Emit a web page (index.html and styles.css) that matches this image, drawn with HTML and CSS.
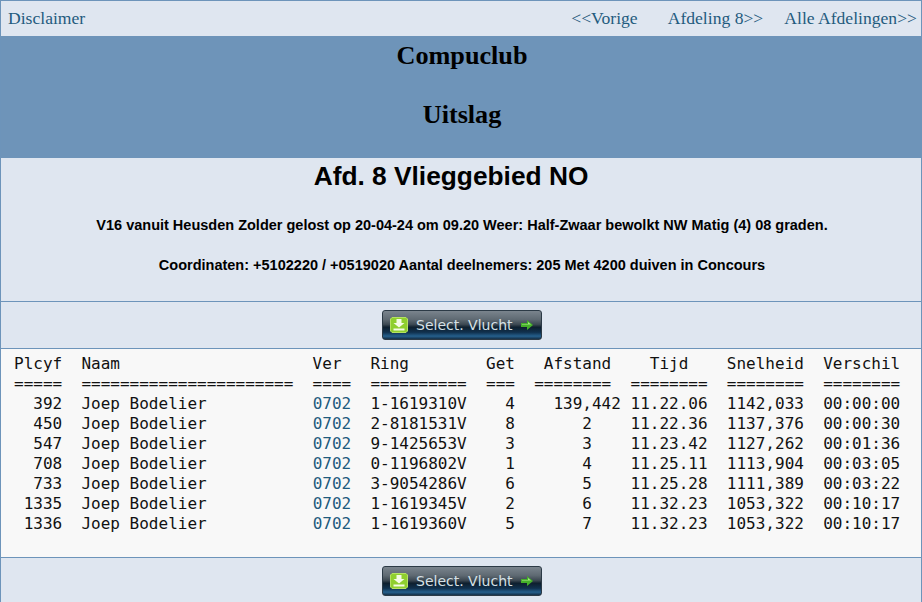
FILE: index.html
```html
<!DOCTYPE html>
<html lang="nl">
<head>
<meta charset="utf-8">
<title>Uitslag</title>
<link rel="stylesheet" href="styles.css">
</head>
<body>
<div class="page">
  <nav class="topbar">
    <a href="#">Disclaimer</a>
    <div class="topnav">
      <a href="#">&lt;&lt;Vorige</a>
      <a href="#">Afdeling 8&gt;&gt;</a>
      <a href="#">Alle Afdelingen&gt;&gt;</a>
    </div>
  </nav>
  <header class="banner">
    <h1>Compuclub</h1>
    <h1>Uitslag</h1>
  </header>
  <section class="info">
    <h2>Afd. 8 Vlieggebied NO</h2>
    <p>V16 vanuit Heusden Zolder gelost op 20-04-24 om 09.20 Weer: Half-Zwaar bewolkt NW Matig (4) 08 graden.</p>
    <p>Coordinaten: +5102220 / +0519020 Aantal deelnemers: 205 Met 4200 duiven in Concours</p>
  </section>
  <div class="btnrow">
    <a class="btn" href="#">
      <svg class="ico" viewBox="0 0 18 16"><path d="M2 0.500h14l1.500 1.500v12l-1.500 1.500H2L0.500 14V2z" fill="#8fcf2e" stroke="#b5e262"/><path d="M6.500 2h5v4h3l-5.500 4.500L3.500 6h3z" fill="#f4fbe4"/><rect x="3.500" y="11.500" width="11" height="2" fill="#f4fbe4"/></svg>
      <span>Select. Vlucht</span>
      <svg class="arrow" viewBox="0 0 12 10"><path d="M0 3h6V0l6 5-6 5V7H0z" fill="#45b02a"/><path d="M1 4h6V2l3 2.500H1z" fill="#a8e884"/></svg>
    </a>
  </div>
  <pre class="results">Plcyf  Naam                    Ver   Ring        Get   Afstand    Tijd    Snelheid  Verschil
=====  ======================  ====  ==========  ===  ========  ========  ========  ========
  392  Joep Bodelier           <a href="#">0702</a>  1-1619310V    4    139,442 11.22.06  1142,033  00:00:00
  450  Joep Bodelier           <a href="#">0702</a>  2-8181531V    8       2    11.22.36  1137,376  00:00:30
  547  Joep Bodelier           <a href="#">0702</a>  9-1425653V    3       3    11.23.42  1127,262  00:01:36
  708  Joep Bodelier           <a href="#">0702</a>  0-1196802V    1       4    11.25.11  1113,904  00:03:05
  733  Joep Bodelier           <a href="#">0702</a>  3-9054286V    6       5    11.25.28  1111,389  00:03:22
 1335  Joep Bodelier           <a href="#">0702</a>  1-1619345V    2       6    11.32.23  1053,322  00:10:17
 1336  Joep Bodelier           <a href="#">0702</a>  1-1619360V    5       7    11.32.23  1053,322  00:10:17</pre>
  <div class="btnrow">
    <a class="btn" href="#">
      <svg class="ico" viewBox="0 0 18 16"><path d="M2 0.500h14l1.500 1.500v12l-1.500 1.500H2L0.500 14V2z" fill="#8fcf2e" stroke="#b5e262"/><path d="M6.500 2h5v4h3l-5.500 4.500L3.500 6h3z" fill="#f4fbe4"/><rect x="3.500" y="11.500" width="11" height="2" fill="#f4fbe4"/></svg>
      <span>Select. Vlucht</span>
      <svg class="arrow" viewBox="0 0 12 10"><path d="M0 3h6V0l6 5-6 5V7H0z" fill="#45b02a"/><path d="M1 4h6V2l3 2.500H1z" fill="#a8e884"/></svg>
    </a>
  </div>
</div>
</body>
</html>
```
FILE: styles.css
```css
html, body { margin: 0; padding: 0; }
body { background: #dfe6f0; height: 602px; overflow: hidden; }
a { color: #1f5b7e; text-decoration: none; }
.page {
  border: 1px solid #6d94ba;
  border-bottom: 0;
  height: 601px;
  background: #dfe6f0;
  overflow: hidden;
}
.topbar {
  height: 35px;
  display: flex;
  justify-content: space-between;
  padding: 7px 4px 0 7px;
  box-sizing: border-box;
  font: 17.6px/20px "Liberation Serif", serif;
}
.topnav { display: flex; }
.topnav a:first-child { margin-right: 30px; }
.topnav a:last-child { margin-left: 21px; }
.banner {
  height: 122px;
  background: #6e94b9;
  text-align: center;
  color: #000;
  padding-left: 2px;
}
.banner h1 {
  margin: 0;
  font: bold 26.2px/30px "Liberation Serif", serif;
  padding-top: 5px;
  height: 59px;
  box-sizing: content-box;
}
.banner h1 + h1 { padding-top: 0; }
.info {
  height: 143px;
  border-bottom: 1px solid #6d94ba;
  text-align: center;
  font-family: "Liberation Sans", sans-serif;
  color: #000;
}
.info h2 { margin: 0; padding: 4px 20px 0 0; font-size: 26.3px; line-height: 28px; font-weight: bold; }
.info p { margin: 0; padding: 24px 0 0 2px; font-size: 14.5px; line-height: 16px; font-weight: bold; }
.info h2 + p { padding-top: 27px; }
.btnrow {
  height: 46px;
  display: flex;
  justify-content: center;
  align-items: flex-start;
  padding: 8px 0 0 2px;
  box-sizing: border-box;
}
.btn {
  width: 160px;
  height: 30px;
  box-sizing: border-box;
  border: 1px solid #2c3a46;
  border-radius: 3px;
  background: linear-gradient(#7a848d 0%, #5f6a73 30%, #3c4852 48%, #0e1f2e 58%, #10314e 76%, #255f8c 90%, #143048 100%);
  display: flex;
  align-items: center;
  padding: 0 8px 0 7px;
  color: #d6e0e6;
  font: 14px/18px "DejaVu Sans", sans-serif;
}
.btn .ico { width: 18px; height: 16px; flex: none; }
.btn span { margin-left: 8px; white-space: nowrap; flex: 1; }
.btn .arrow { width: 12px; height: 10px; flex: none; }
.results {
  margin: 0;
  height: 210px;
  box-sizing: border-box;
  padding: 5px 0 0 13px;
  background: #f8f8f8;
  border-top: 1px solid #6d94ba;
  border-bottom: 1px solid #6d94ba;
  font: 16px/20px "DejaVu Sans Mono", monospace;
  color: #111;
}
```
